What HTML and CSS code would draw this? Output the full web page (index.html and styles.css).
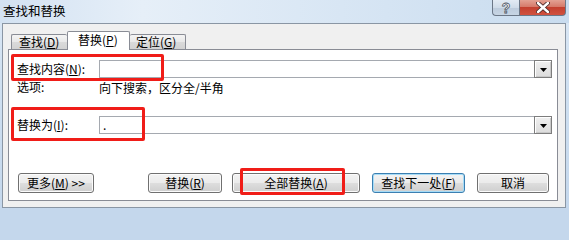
FILE: index.html
```html
<!DOCTYPE html>
<html lang="zh-CN">
<head>
<meta charset="utf-8">
<title>查找和替换</title>
<link rel="stylesheet" href="styles.css">
</head>
<body>
<div class="window">
  <div class="titlebar">
    <span class="title">查找和替换</span>
    <div class="caption">
      <span class="cap help">?</span>
      <span class="cap close">
        <svg width="14" height="11" viewBox="0 0 14 11"><path d="M2 1 L12 10 M12 1 L2 10" stroke="#4a2a2a" stroke-width="4.2" stroke-linecap="round"/><path d="M2 1 L12 10 M12 1 L2 10" stroke="#fff" stroke-width="2.4" stroke-linecap="round"/></svg>
      </span>
    </div>
  </div>
  <div class="client">
    <div class="tabs">
      <div class="tab t1">查找(<u>D</u>)</div>
      <div class="tab active">替换(<u>P</u>)</div>
      <div class="tab t3">定位(<u>G</u>)</div>
    </div>
    <div class="panel">
      <div class="row field">
        <span class="lbl">查找内容(<u>N</u>):</span>
        <div class="combo">
          <span class="combo-text"></span>
          <span class="drop"><svg width="7" height="4" viewBox="0 0 7 4"><path d="M0 0 H7 L3.5 4 Z" fill="#000"/></svg></span>
        </div>
      </div>
      <div class="row opt">
        <span class="lbl">选项:</span>
        <span class="opt-text">向下搜索，区分全/半角</span>
      </div>
      <div class="row field r3">
        <span class="lbl">替换为(<u>I</u>):</span>
        <div class="combo">
          <span class="combo-text">.</span>
          <span class="drop"><svg width="7" height="4" viewBox="0 0 7 4"><path d="M0 0 H7 L3.5 4 Z" fill="#000"/></svg></span>
        </div>
      </div>
      <div class="buttons">
        <button class="btn b-more">更多(<u>M</u>) &gt;&gt;</button>
        <button class="btn b-rep">替换(<u>R</u>)</button>
        <button class="btn b-all">全部替换(<u>A</u>)</button>
        <button class="btn b-next default">查找下一处(<u>F</u>)</button>
        <button class="btn b-cancel">取消</button>
      </div>
    </div>
  </div>
  <div class="mark m1"></div>
  <div class="mark m2"></div>
  <div class="mark m3"></div>
</div>
</body>
</html>
```
FILE: styles.css
```css
* { box-sizing: border-box; }
html {
  background: #c4d7ec;
}
html, body { margin: 0; padding: 0; }
body {
  width: 569px;
  height: 211px;
  overflow: hidden;
  font-family: "Noto Sans CJK SC", "Liberation Sans", sans-serif;
  font-size: 12px;
  color: #000;
  background: #c9dbee;
}
.window {
  position: relative;
  width: 569px;
  height: 211px;
  background: linear-gradient(to bottom, #dce8f5 0%, #cfe0f1 40%, #c4d7ec 100%);
}
.titlebar {
  height: 23px;
  display: flex;
  align-items: flex-start;
  background: linear-gradient(to right, #d3e2f2 0%, #e6eff8 25%, #d8e6f4 60%, #c9dcef 100%);
}
.title {
  align-self: center;
  padding-left: 3px;
  font-size: 12.5px;
  line-height: 16px;
  margin-top: -1px;
}
.caption {
  margin-left: auto;
  margin-right: 3px;
  display: flex;
  height: 16px;
}
.cap {
  height: 16px;
  display: flex;
  align-items: center;
  justify-content: center;
  border: 1px solid #6b7787;
  border-top: none;
}
.help {
  width: 27px;
  border-right: none;
  border-radius: 0 0 0 4px;
  background: linear-gradient(to bottom, #e3ebf4 0%, #d0dce9 50%, #bccbdc 51%, #c7d5e4 100%);
  color: #fff;
  font-family: "Liberation Sans", sans-serif;
  font-weight: bold;
  font-size: 14px;
  line-height: 14px;
  -webkit-text-stroke: 0.8px #4b5563;
}
.close {
  width: 47px;
  border-radius: 0 0 4px 0;
  background: linear-gradient(to bottom, #e3a193 0%, #d67a6a 45%, #c4402f 50%, #d0513f 100%);
}
.client {
  margin: 0 3px 0 2px;
  height: 185px;
  border: 1px solid #8a96a4;
  background: #f0f0f0;
  padding: 7px 7px 6px 5px;
  display: flex;
  flex-direction: column;
}
.tabs {
  display: flex;
  align-items: flex-end;
  margin-left: 3px;
  height: 18px;
}
.tab {
  height: 15px;
  border: 1px solid #898c95;
  border-bottom: none;
  border-radius: 2px 2px 0 0;
  background: linear-gradient(to bottom, #f4f4f4 0%, #e8e8e8 50%, #dadada 51%, #d2d2d2 100%);
  display: flex;
  align-items: center;
  line-height: 14px;
}
.t1 { width: 56px; padding-left: 7px; border-right: none; }
.t3 { width: 56px; padding-left: 6px; border-left: none; }
.tab.active {
  width: 63px;
  height: 19px;
  margin-bottom: -1px;
  position: relative;
  z-index: 1;
  background: #fff;
  padding-left: 10px;
  padding-bottom: 2px;
}
.panel {
  flex: 1;
  border: 1px solid #898c95;
  background: #fff;
  padding: 10px 5px 0 8px;
}
.row {
  display: flex;
  align-items: center;
}
.lbl {
  width: 82px;
  flex: none;
  line-height: 14px;
}
.field { height: 18px; }
.opt { height: 16px; margin-top: 1px; }
.r3 { margin-top: 21px; }
.combo {
  flex: 1;
  height: 18px;
  border: 1px solid #a5a9b0;
  display: flex;
  background: #fff;
}
.combo-text {
  flex: 1;
  padding-left: 3px;
  line-height: 15px;
}
.drop {
  width: 18px;
  margin: -1px -1px -1px 0;
  border: 1px solid #7d7d7d;
  box-shadow: inset 1px 1px 0 #fff, inset -1px -1px 0 #c9c9c9;
  background: linear-gradient(to bottom, #f0f0f0, #dcdcdc);
  display: flex;
  align-items: center;
  justify-content: center;
  padding-top: 1px;
}
.buttons {
  display: flex;
  margin-top: 39px;
}
.btn {
  height: 20px;
  padding: 0;
  font-family: "Noto Sans CJK SC", "Liberation Sans", sans-serif;
  font-size: 12px;
  line-height: 14px;
  color: #000;
  border: 1px solid #707070;
  border-radius: 3px;
  background: linear-gradient(to bottom, #f3f3f3 0%, #ebebeb 48%, #dddddd 52%, #cfcfcf 100%);
  box-shadow: inset 0 0 0 1px #fbfbfb;
}
.b-more { width: 76px; margin-left: 1px; }
.b-rep { width: 74px; margin-left: 54px; }
.b-all { width: 128px; margin-left: 10px; }
.b-next { width: 93px; margin-left: 12px; }
.b-cancel { width: 72px; margin-left: 12px; }
.btn.default {
  border-color: #3c7fb1;
  box-shadow: inset 0 0 0 1px #a6dcf7;
}
.mark {
  position: absolute;
  border: 3px solid #f01d18;
  border-radius: 2px;
}
.m1 { left: 11px; top: 54px; width: 153px; height: 27px; }
.m2 { left: 11px; top: 107px; width: 134px; height: 34px; }
.m3 { left: 240px; top: 168px; width: 105px; height: 27px; }
```
